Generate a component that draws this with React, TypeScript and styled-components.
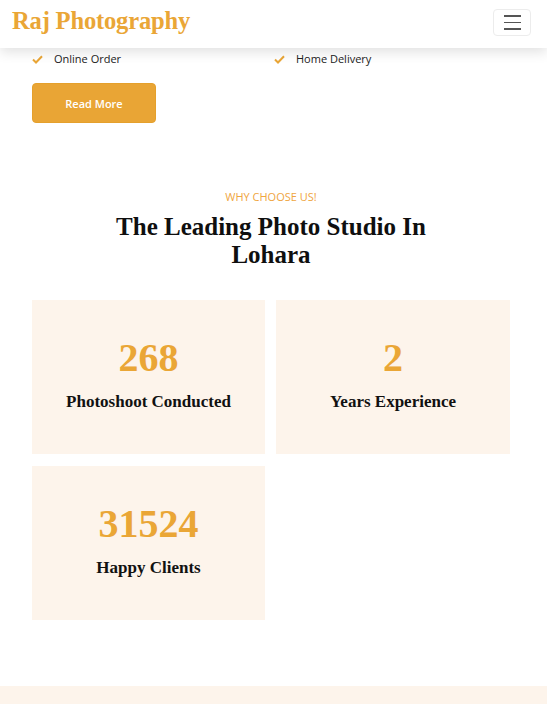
import React from "react";
import styled, { createGlobalStyle } from "styled-components";

const Global = createGlobalStyle`
  html, body { margin: 0; padding: 0; background: #fff; }
  body { font-family: "Open Sans", "Liberation Sans", sans-serif; color: #212529; overflow: hidden; }
  * { box-sizing: border-box; }
`;

const ORANGE = "#EAA636";
const CREAM = "#FDF4EB";
const SERIF = `"Liberation Serif", "DejaVu Serif", serif`;

const Page = styled.div`
  width: 547px;
  height: 704px;
  display: flex;
  flex-direction: column;
  overflow: hidden;
`;

const NavBar = styled.nav`
  height: 48px;
  flex-shrink: 0;
  display: flex;
  align-items: center;
  justify-content: space-between;
  padding: 0 16px 0 12px;
  background: #fff;
  box-shadow: 0 4px 12px rgba(0, 0, 0, 0.12);
  position: relative;
  z-index: 2;
`;

const Brand = styled.div`
  font-family: ${SERIF};
  font-weight: 700;
  font-size: 24.6px;
  color: ${ORANGE};
  letter-spacing: -0.2px;
  margin-top: -6px;
`;

const Toggler = styled.button`
  width: 38px;
  height: 27px;
  margin-top: -3px;
  border: 1px solid #ececec;
  border-radius: 4px;
  background: #fff;
  display: flex;
  flex-direction: column;
  align-items: center;
  justify-content: center;
  gap: 5px;
  padding: 0;
`;

const Bar = styled.span`
  display: block;
  width: 17px;
  height: 1.5px;
  background: #555;
`;

const Content = styled.main`
  padding: 0 37px 0 32px;
  display: flex;
  flex-direction: column;
`;

const CheckRow = styled.div`
  display: grid;
  grid-template-columns: 242px 1fr;
  margin-top: 3px;
`;

const CheckItem = styled.div`
  display: flex;
  align-items: center;
  gap: 11px;
  font-size: 11px;
  line-height: 16px;
  color: #222;
`;

const Btn = styled.button`
  margin-top: 16px;
  width: 124px;
  height: 40px;
  border: 1px solid #E5A02C;
  border-radius: 4px;
  background: #E9A535;
  color: #fff;
  font-family: "Open Sans", sans-serif;
  font-weight: 600;
  font-size: 11px;
`;

const Eyebrow = styled.div`
  margin-top: 66px;
  text-align: center;
  font-size: 11px;
  line-height: 16px;
  color: #EFA540;
`;

const Heading = styled.h2`
  margin: 8px auto 0;
  max-width: 330px;
  text-align: center;
  font-family: ${SERIF};
  font-weight: 700;
  font-size: 25px;
  line-height: 28px;
  color: #0f0f0f;
`;

const Grid = styled.div`
  margin-top: 31px;
  display: grid;
  grid-template-columns: 233px 234px;
  column-gap: 11px;
  row-gap: 12px;
`;

const Card = styled.div`
  height: 154px;
  background: ${CREAM};
  display: flex;
  flex-direction: column;
  align-items: center;
  justify-content: center;
  padding-bottom: 4px;
`;

const Num = styled.div`
  font-family: ${SERIF};
  font-weight: 700;
  font-size: 40px;
  line-height: 44px;
  color: ${ORANGE};
`;

const Label = styled.div`
  margin-top: 10px;
  font-family: ${SERIF};
  font-weight: 700;
  font-size: 17px;
  line-height: 24px;
  color: #111;
`;

const Band = styled.div`
  margin-top: 66px;
  height: 40px;
  background: ${CREAM};
`;

const Check = () => (
  <svg width="11" height="9" viewBox="0 0 11 9">
    <polyline points="1,4.5 4,7.5 10,1.2" fill="none" stroke={ORANGE} strokeWidth="2" />
  </svg>
);

const stats = [
  { n: "268", l: "Photoshoot Conducted" },
  { n: "2", l: "Years Experience" },
  { n: "31524", l: "Happy Clients" },
];

export default function App() {
  return (
    <Page>
      <Global />
      <NavBar>
        <Brand>Raj Photography</Brand>
        <Toggler aria-label="menu">
          <Bar />
          <Bar />
          <Bar />
        </Toggler>
      </NavBar>
      <Content>
        <CheckRow>
          <CheckItem><Check />Online Order</CheckItem>
          <CheckItem><Check />Home Delivery</CheckItem>
        </CheckRow>
        <div><Btn>Read More</Btn></div>
        <Eyebrow>WHY CHOOSE US!</Eyebrow>
        <Heading>The Leading Photo Studio In Lohara</Heading>
        <Grid>
          {stats.map((s) => (
            <Card key={s.l}>
              <Num>{s.n}</Num>
              <Label>{s.l}</Label>
            </Card>
          ))}
        </Grid>
      </Content>
      <Band />
    </Page>
  );
}
